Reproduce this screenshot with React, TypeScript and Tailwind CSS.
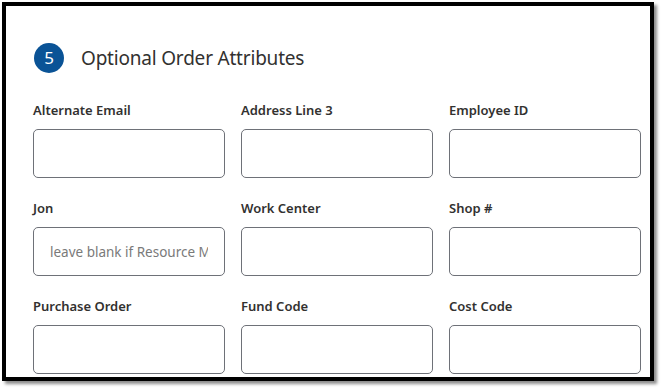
const rows: { label: string; placeholder?: string }[][] = [
  [{ label: "Alternate Email" }, { label: "Address Line 3" }, { label: "Employee ID" }],
  [{ label: "Jon", placeholder: "leave blank if Resource Manager" }, { label: "Work Center" }, { label: "Shop #" }],
  [{ label: "Purchase Order" }, { label: "Fund Code" }, { label: "Cost Code" }],
];

function Field({ label, placeholder }: { label: string; placeholder?: string }) {
  return (
    <div className="flex flex-col">
      <label className="h-[19px] text-[13px] font-semibold leading-[19px] text-[#323130]">{label}</label>
      <input
        placeholder={placeholder}
        className="mt-[9px] h-[49px] w-[192px] rounded-[5px] border-[1.5px] border-[#6e7178] bg-white px-[16px] text-[13.5px] text-[#333] placeholder:text-[#7a7a7a] outline-none"
      />
    </div>
  );
}

export default function App() {
  return (
    <div className="relative h-[389px] w-[661px] bg-white" style={{ fontFamily: '"Noto Sans", "Open Sans", sans-serif' }}>
      <div className="absolute left-[2px] top-[2px] h-[379px] w-[652px] overflow-hidden border-[4px] border-black bg-white shadow-[3px_3px_3px_rgba(0,0,0,0.45)]">
        <div className="pl-[27px] pt-[37px]">
          <div className="flex items-center gap-[17px] pl-[1px]">
            <div className="flex h-[30px] w-[30px] items-center justify-center rounded-full bg-[#0a5396] text-[17px] text-white">5</div>
            <h2 className="text-[19px] leading-[28px] tracking-[-0.2px] text-[#323130]">Optional Order Attributes</h2>
          </div>
          <div className="mt-[28px] flex flex-col gap-[21px]">
            {rows.map((row, i) => (
              <div key={i} className="flex gap-[16px]">
                {row.map((f) => (
                  <Field key={f.label} label={f.label} placeholder={f.placeholder} />
                ))}
              </div>
            ))}
          </div>
        </div>
      </div>
    </div>
  );
}
